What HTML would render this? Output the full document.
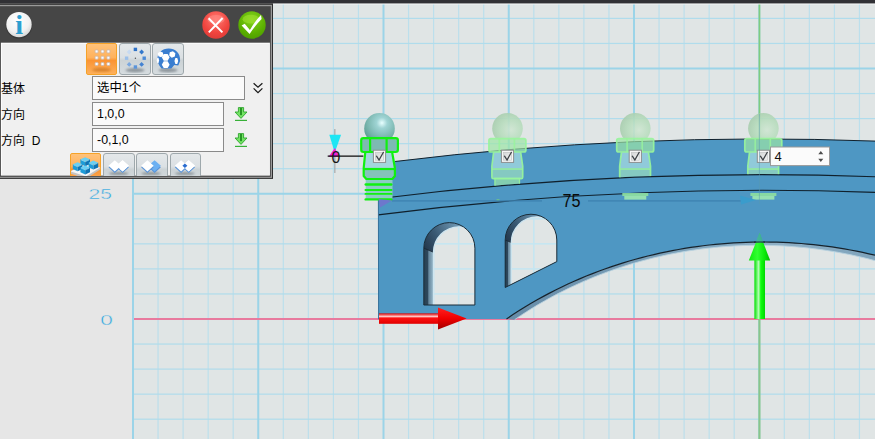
<!DOCTYPE html>
<html><head><meta charset="utf-8"><title>3D</title>
<style>
html,body{margin:0;padding:0;}
body{width:875px;height:439px;overflow:hidden;position:relative;background:#e6e6e6;font-family:"Liberation Sans","Noto Sans CJK SC",sans-serif;}
#cv{position:absolute;left:0;top:0;}
#dlg{position:absolute;left:0px;top:0px;width:270px;height:176px;overflow:hidden;}
.lbl{position:absolute;left:1px;font-size:12px;color:#000;white-space:nowrap;}
.inp{position:absolute;left:92px;height:22px;border:1px solid #8a8a8a;background:#fafafa;font-size:12.4px;line-height:22px;padding-left:4px;box-sizing:content-box;color:#000;}
.tb{position:absolute;border:1px solid #9ea8ac;border-radius:3px;background:linear-gradient(#e4e8ea 0%,#dbe0e3 45%,#ccd3d6 55%,#d6dcdf 100%);box-sizing:border-box;}
.tb.on{border-color:#f5a228;border-radius:2px;background:linear-gradient(#ffc27a 0%,#ffb25c 45%,#fa9434 55%,#fdb05c 100%);}
</style></head><body>

<svg id="cv" width="875" height="439" viewBox="0 0 875 439">
<defs>
<radialGradient id="sph1" cx="0.58" cy="0.32" r="0.7"><stop offset="0" stop-color="#e8ffff"/><stop offset="0.25" stop-color="#9fd4d4"/><stop offset="0.7" stop-color="#78b4ac"/><stop offset="1" stop-color="#5a9a90"/></radialGradient>
<radialGradient id="sph2" cx="0.62" cy="0.55" r="0.8"><stop offset="0" stop-color="#cfe6d2"/><stop offset="0.45" stop-color="#b6dcbc"/><stop offset="0.8" stop-color="#a6ccac"/><stop offset="1" stop-color="#9cc0a4"/></radialGradient>
<linearGradient id="redsh" x1="0" y1="0" x2="0" y2="1"><stop offset="0" stop-color="#e00000"/><stop offset="0.3" stop-color="#ffc4c4"/><stop offset="0.45" stop-color="#ff1010"/><stop offset="1" stop-color="#e00000"/></linearGradient>
<linearGradient id="redhd" x1="0" y1="0" x2="0" y2="1"><stop offset="0" stop-color="#ff2020"/><stop offset="0.5" stop-color="#f00000"/><stop offset="1" stop-color="#a00000"/></linearGradient>
<linearGradient id="grnsh" x1="0" y1="0" x2="1" y2="0"><stop offset="0" stop-color="#00e000"/><stop offset="0.4" stop-color="#b4ffb4"/><stop offset="0.6" stop-color="#10ff10"/><stop offset="1" stop-color="#00d800"/></linearGradient>
<linearGradient id="grnhd" x1="0" y1="0" x2="1" y2="0"><stop offset="0" stop-color="#10e810"/><stop offset="0.4" stop-color="#30ff30"/><stop offset="0.75" stop-color="#08e808"/><stop offset="1" stop-color="#00b800"/></linearGradient>
<linearGradient id="soff" gradientUnits="userSpaceOnUse" x1="506" y1="0" x2="875" y2="0"><stop offset="0" stop-color="#668ca8"/><stop offset="0.5" stop-color="#7fa4bc"/><stop offset="0.72" stop-color="#8eb0c6"/><stop offset="1" stop-color="#7fa4bc"/></linearGradient>
<linearGradient id="tun1" x1="0" y1="0" x2="1" y2="0"><stop offset="0" stop-color="#2c4a60"/><stop offset="1" stop-color="#7fa9c6"/></linearGradient>
<linearGradient id="cbg" x1="0" y1="0" x2="1" y2="1"><stop offset="0" stop-color="#d4d6d6"/><stop offset="1" stop-color="#f4f4f4"/></linearGradient>
</defs>
<rect x="133" y="4" width="742" height="435" fill="#e0e5e5"/>
<rect x="157.45" y="4" width="1.2" height="439" fill="#bcdfec"/>
<rect x="182.50" y="4" width="1.2" height="439" fill="#bcdfec"/>
<rect x="207.55" y="4" width="1.2" height="439" fill="#bcdfec"/>
<rect x="232.60" y="4" width="1.2" height="439" fill="#bcdfec"/>
<rect x="282.70" y="4" width="1.2" height="439" fill="#bcdfec"/>
<rect x="307.75" y="4" width="1.2" height="439" fill="#bcdfec"/>
<rect x="332.80" y="4" width="1.2" height="439" fill="#bcdfec"/>
<rect x="357.85" y="4" width="1.2" height="439" fill="#bcdfec"/>
<rect x="407.95" y="4" width="1.2" height="439" fill="#bcdfec"/>
<rect x="433.00" y="4" width="1.2" height="439" fill="#bcdfec"/>
<rect x="458.05" y="4" width="1.2" height="439" fill="#bcdfec"/>
<rect x="483.10" y="4" width="1.2" height="439" fill="#bcdfec"/>
<rect x="533.20" y="4" width="1.2" height="439" fill="#bcdfec"/>
<rect x="558.25" y="4" width="1.2" height="439" fill="#bcdfec"/>
<rect x="583.30" y="4" width="1.2" height="439" fill="#bcdfec"/>
<rect x="608.35" y="4" width="1.2" height="439" fill="#bcdfec"/>
<rect x="658.45" y="4" width="1.2" height="439" fill="#bcdfec"/>
<rect x="683.50" y="4" width="1.2" height="439" fill="#bcdfec"/>
<rect x="708.55" y="4" width="1.2" height="439" fill="#bcdfec"/>
<rect x="733.60" y="4" width="1.2" height="439" fill="#bcdfec"/>
<rect x="783.70" y="4" width="1.2" height="439" fill="#bcdfec"/>
<rect x="808.75" y="4" width="1.2" height="439" fill="#bcdfec"/>
<rect x="833.80" y="4" width="1.2" height="439" fill="#bcdfec"/>
<rect x="858.85" y="4" width="1.2" height="439" fill="#bcdfec"/>
<rect x="133" y="418.60" width="875" height="1.2" fill="#b0dcec"/>
<rect x="133" y="393.55" width="875" height="1.2" fill="#b0dcec"/>
<rect x="133" y="368.50" width="875" height="1.2" fill="#b0dcec"/>
<rect x="133" y="343.45" width="875" height="1.2" fill="#b0dcec"/>
<rect x="133" y="293.35" width="875" height="1.2" fill="#b0dcec"/>
<rect x="133" y="268.30" width="875" height="1.2" fill="#b0dcec"/>
<rect x="133" y="243.25" width="875" height="1.2" fill="#b0dcec"/>
<rect x="133" y="218.20" width="875" height="1.2" fill="#b0dcec"/>
<rect x="133" y="168.10" width="875" height="1.2" fill="#b0dcec"/>
<rect x="133" y="143.05" width="875" height="1.2" fill="#b0dcec"/>
<rect x="133" y="118.00" width="875" height="1.2" fill="#b0dcec"/>
<rect x="133" y="92.95" width="875" height="1.2" fill="#b0dcec"/>
<rect x="133" y="42.85" width="875" height="1.2" fill="#b0dcec"/>
<rect x="133" y="17.80" width="875" height="1.2" fill="#b0dcec"/>
<rect x="133" y="192.75" width="875" height="2" fill="#9bd4e8"/>
<rect x="133" y="67.50" width="875" height="2" fill="#9bd4e8"/>
<rect x="132.00" y="4" width="2" height="439" fill="#9bd4e8"/>
<rect x="257.25" y="4" width="2" height="439" fill="#9bd4e8"/>
<rect x="382.50" y="4" width="2" height="439" fill="#9bd4e8"/>
<rect x="507.75" y="4" width="2" height="439" fill="#9bd4e8"/>
<rect x="633.00" y="4" width="2" height="439" fill="#9bd4e8"/>
<rect x="758.25" y="4" width="2" height="439" fill="#9bd4e8"/>
<rect x="134" y="318" width="875" height="2" fill="#e87a9e"/>
<rect x="758.6" y="4" width="1.7" height="439" fill="#80cc7e"/>
<text x="88.6" y="199.3" font-family="Liberation Sans,sans-serif" font-size="15.4" fill="#2fa6e0" textLength="23.4" lengthAdjust="spacingAndGlyphs" stroke="#e6e6e6" stroke-width="0.4">25</text>
<text x="100.2" y="324.7" font-family="Liberation Sans,sans-serif" font-size="15.4" fill="#2fa6e0" textLength="12.6" lengthAdjust="spacingAndGlyphs" stroke="#e6e6e6" stroke-width="0.4">0</text>
<path d="M514.6,319.69 L520.6,315.63 L526.6,311.73 L532.6,307.98 L538.6,304.37 L544.6,300.90 L550.6,297.56 L556.6,294.35 L562.7,291.27 L568.7,288.31 L574.7,285.47 L580.7,282.74 L586.7,280.13 L592.7,277.62 L598.7,275.22 L604.7,272.93 L610.7,270.74 L616.7,268.65 L622.7,266.66 L628.7,264.76 L634.7,262.96 L640.7,261.26 L646.7,259.65 L652.8,258.12 L658.8,256.69 L664.8,255.35 L670.8,254.09 L676.8,252.92 L682.8,251.84 L688.8,250.84 L694.8,249.93 L700.8,249.10 L706.8,248.35 L712.8,247.69 L718.8,247.11 L724.8,246.60 L730.8,246.19 L736.8,245.85 L742.9,245.59 L748.9,245.41 L754.9,245.32 L760.9,245.30 L766.9,245.37 L772.9,245.52 L778.9,245.74 L784.9,246.05 L790.9,246.44 L796.9,246.91 L802.9,247.46 L808.9,248.09 L814.9,248.81 L820.9,249.61 L826.9,250.49 L833.0,251.45 L839.0,252.51 L845.0,253.64 L851.0,254.87 L857.0,256.18 L863.0,257.57 L869.0,259.06 L875.0,260.64 L875.0,255.24 L868.9,253.80 L862.7,252.45 L856.6,251.18 L850.4,250.00 L844.3,248.91 L838.1,247.89 L832.0,246.96 L825.9,246.11 L819.7,245.35 L813.6,244.66 L807.4,244.05 L801.3,243.52 L795.2,243.07 L789.0,242.70 L782.9,242.41 L776.7,242.20 L770.6,242.06 L764.5,242.00 L758.3,242.02 L752.2,242.12 L746.0,242.30 L739.9,242.55 L733.7,242.89 L727.6,243.30 L721.5,243.79 L715.3,244.36 L709.2,245.01 L703.0,245.74 L696.9,246.55 L690.8,247.44 L684.6,248.42 L678.5,249.48 L672.3,250.62 L666.2,251.84 L660.0,253.15 L653.9,254.55 L647.8,256.03 L641.6,257.61 L635.5,259.27 L629.3,261.03 L623.2,262.88 L617.0,264.82 L610.9,266.86 L604.8,269.00 L598.6,271.24 L592.5,273.58 L586.3,276.03 L580.2,278.59 L574.1,281.25 L567.9,284.03 L561.8,286.93 L555.6,289.95 L549.5,293.10 L543.4,296.37 L537.2,299.78 L531.1,303.32 L524.9,307.01 L518.8,310.85 L512.6,314.85 L506.5,319.01 Z" fill="url(#soff)"/>
<path d="M514.6,319.69 L520.6,315.63 L526.6,311.73 L532.6,307.98 L538.6,304.37 L544.6,300.90 L550.6,297.56 L556.6,294.35 L562.7,291.27 L568.7,288.31 L574.7,285.47 L580.7,282.74 L586.7,280.13 L592.7,277.62 L598.7,275.22 L604.7,272.93 L610.7,270.74 L616.7,268.65 L622.7,266.66 L628.7,264.76 L634.7,262.96 L640.7,261.26 L646.7,259.65 L652.8,258.12 L658.8,256.69 L664.8,255.35 L670.8,254.09 L676.8,252.92 L682.8,251.84 L688.8,250.84 L694.8,249.93 L700.8,249.10 L706.8,248.35 L712.8,247.69 L718.8,247.11 L724.8,246.60 L730.8,246.19 L736.8,245.85 L742.9,245.59 L748.9,245.41 L754.9,245.32 L760.9,245.30 L766.9,245.37 L772.9,245.52 L778.9,245.74 L784.9,246.05 L790.9,246.44 L796.9,246.91 L802.9,247.46 L808.9,248.09 L814.9,248.81 L820.9,249.61 L826.9,250.49 L833.0,251.45 L839.0,252.51 L845.0,253.64 L851.0,254.87 L857.0,256.18 L863.0,257.57 L869.0,259.06 L875.0,260.64" fill="none" stroke="#b9d2e0" stroke-width="0.9"/>
<path d="M378.5,319 L378.2,198.7 L395.0,161.5 A3000,3000 0 0 1 875,141.1 L875.0,255.24 L868.9,253.80 L862.7,252.45 L856.6,251.18 L850.4,250.00 L844.3,248.91 L838.1,247.89 L832.0,246.96 L825.9,246.11 L819.7,245.35 L813.6,244.66 L807.4,244.05 L801.3,243.52 L795.2,243.07 L789.0,242.70 L782.9,242.41 L776.7,242.20 L770.6,242.06 L764.5,242.00 L758.3,242.02 L752.2,242.12 L746.0,242.30 L739.9,242.55 L733.7,242.89 L727.6,243.30 L721.5,243.79 L715.3,244.36 L709.2,245.01 L703.0,245.74 L696.9,246.55 L690.8,247.44 L684.6,248.42 L678.5,249.48 L672.3,250.62 L666.2,251.84 L660.0,253.15 L653.9,254.55 L647.8,256.03 L641.6,257.61 L635.5,259.27 L629.3,261.03 L623.2,262.88 L617.0,264.82 L610.9,266.86 L604.8,269.00 L598.6,271.24 L592.5,273.58 L586.3,276.03 L580.2,278.59 L574.1,281.25 L567.9,284.03 L561.8,286.93 L555.6,289.95 L549.5,293.10 L543.4,296.37 L537.2,299.78 L531.1,303.32 L524.9,307.01 L518.8,310.85 L512.6,314.85 L506.5,319.01 Z" fill="#4e97c3"/>
<path d="M395.0,161.5 A3000,3000 0 0 1 875,141.1" fill="none" stroke="#10202c" stroke-width="1"/>
<path d="M377.6,198.7 A3075,3075 0 0 1 875,176.7" fill="none" stroke="#10202c" stroke-width="1.1"/>
<path d="M378.2,214.9 A3015,3015 0 0 1 875,192.4" fill="none" stroke="#10202c" stroke-width="1.1"/>
<path d="M506.5,319.01 L512.6,314.85 L518.8,310.85 L524.9,307.01 L531.1,303.32 L537.2,299.78 L543.4,296.37 L549.5,293.10 L555.6,289.95 L561.8,286.93 L567.9,284.03 L574.1,281.25 L580.2,278.59 L586.3,276.03 L592.5,273.58 L598.6,271.24 L604.8,269.00 L610.9,266.86 L617.0,264.82 L623.2,262.88 L629.3,261.03 L635.5,259.27 L641.6,257.61 L647.8,256.03 L653.9,254.55 L660.0,253.15 L666.2,251.84 L672.3,250.62 L678.5,249.48 L684.6,248.42 L690.8,247.44 L696.9,246.55 L703.0,245.74 L709.2,245.01 L715.3,244.36 L721.5,243.79 L727.6,243.30 L733.7,242.89 L739.9,242.55 L746.0,242.30 L752.2,242.12 L758.3,242.02 L764.5,242.00 L770.6,242.06 L776.7,242.20 L782.9,242.41 L789.0,242.70 L795.2,243.07 L801.3,243.52 L807.4,244.05 L813.6,244.66 L819.7,245.35 L825.9,246.11 L832.0,246.96 L838.1,247.89 L844.3,248.91 L850.4,250.00 L856.6,251.18 L862.7,252.45 L868.9,253.80 L875.0,255.24" fill="none" stroke="#15222c" stroke-width="1.2"/>
<path d="M378.4,198.7 L378.6,319.3" fill="none" stroke="#35709a" stroke-width="1"/>
<path d="M378,198.7 L395.0,161.5" fill="none" stroke="#3c7caa" stroke-width="0.8"/>
<clipPath id="w1"><path d="M423.8,305 L423.8,248.14999999999998 A25.55,25.55 0 0 1 474.9,248.14999999999998 L474.9,305 Z"/></clipPath>
<clipPath id="w1i"><path d="M433.5,329.2 L433.5,252.34999999999997 A25.55,25.55 0 0 1 484.59999999999997,252.34999999999997 L484.59999999999997,329.2 Z"/></clipPath>
<linearGradient id="w1a" gradientUnits="userSpaceOnUse" x1="423.8" y1="248.14999999999998" x2="467.2" y2="222.6"><stop offset="0" stop-color="#22364a"/><stop offset="0.35" stop-color="#3a5a74"/><stop offset="1" stop-color="#84b0cc"/></linearGradient>
<linearGradient id="w1w" gradientUnits="userSpaceOnUse" x1="423.8" y1="0" x2="433.5" y2="0"><stop offset="0" stop-color="#284052"/><stop offset="0.44" stop-color="#2e485c"/><stop offset="0.5" stop-color="#65869c"/><stop offset="1" stop-color="#9cbccd"/></linearGradient>
<g clip-path="url(#w1)">
<path d="M423.8,305 L423.8,248.14999999999998 A25.55,25.55 0 0 1 474.9,248.14999999999998 L474.9,305 Z" fill="url(#w1a)"/>
<path d="M423.8,248.14999999999998 L433.5,252.34999999999997 L433.5,335 L423.8,335 Z" fill="url(#w1w)"/>
<path d="M423.8,248.14999999999998 L433.5,252.34999999999997" stroke="#16242e" stroke-width="0.9" opacity="0.8"/>
<path d="M433.5,329.2 L433.5,252.34999999999997 A25.55,25.55 0 0 1 484.59999999999997,252.34999999999997 L484.59999999999997,329.2 Z" fill="#e0e5e5"/>
<g clip-path="url(#w1i)">
<rect x="432.85" y="222.6" width="1.5" height="120" fill="#c4e6f2"/>
<rect x="457.90" y="222.6" width="1.5" height="120" fill="#c4e6f2"/>
<rect x="423.8" y="293.20" width="51.099999999999966" height="1.5" fill="#c4e6f2"/>
<rect x="423.8" y="268.15" width="51.099999999999966" height="1.5" fill="#c4e6f2"/>
<rect x="423.8" y="243.10" width="51.099999999999966" height="1.5" fill="#c4e6f2"/>
</g>
<path d="M433.5,329.2 L433.5,252.34999999999997 A25.55,25.55 0 0 1 484.59999999999997,252.34999999999997 L484.59999999999997,329.2 Z" fill="none" stroke="#cfe6f0" stroke-width="1.3"/>
</g>
<path d="M423.8,305 L423.8,248.14999999999998 A25.55,25.55 0 0 1 474.9,248.14999999999998 L474.9,305 Z" fill="none" stroke="#1a2c38" stroke-width="1"/>
<clipPath id="w2"><path d="M505.2,287.5 L505.2,239.99999999999997 A25.80,25.80 0 0 1 556.8,239.99999999999997 L556.8,261.6 Z"/></clipPath>
<clipPath id="w2i"><path d="M511.3,310.1 L511.3,242.59999999999997 A25.80,25.80 0 0 1 562.9,242.59999999999997 L562.9,284.20000000000005 Z"/></clipPath>
<linearGradient id="w2a" gradientUnits="userSpaceOnUse" x1="505.2" y1="239.99999999999997" x2="549.1" y2="214.2"><stop offset="0" stop-color="#22364a"/><stop offset="0.35" stop-color="#3a5a74"/><stop offset="1" stop-color="#84b0cc"/></linearGradient>
<linearGradient id="w2w" gradientUnits="userSpaceOnUse" x1="505.2" y1="0" x2="511.3" y2="0"><stop offset="0" stop-color="#284052"/><stop offset="0.44" stop-color="#2e485c"/><stop offset="0.5" stop-color="#65869c"/><stop offset="1" stop-color="#9cbccd"/></linearGradient>
<g clip-path="url(#w2)">
<path d="M505.2,287.5 L505.2,239.99999999999997 A25.80,25.80 0 0 1 556.8,239.99999999999997 L556.8,261.6 Z" fill="url(#w2a)"/>
<path d="M505.2,239.99999999999997 L511.3,242.59999999999997 L511.3,317.5 L505.2,317.5 Z" fill="url(#w2w)"/>
<path d="M505.2,239.99999999999997 L511.3,242.59999999999997" stroke="#16242e" stroke-width="0.9" opacity="0.8"/>
<path d="M511.3,310.1 L511.3,242.59999999999997 A25.80,25.80 0 0 1 562.9,242.59999999999997 L562.9,284.20000000000005 Z" fill="#e0e5e5"/>
<g clip-path="url(#w2i)">
<rect x="533.05" y="214.2" width="1.5" height="120" fill="#c4e6f2"/>
<rect x="505.2" y="268.15" width="51.599999999999966" height="1.5" fill="#c4e6f2"/>
<rect x="505.2" y="243.10" width="51.599999999999966" height="1.5" fill="#c4e6f2"/>
<rect x="505.2" y="218.05" width="51.599999999999966" height="1.5" fill="#c4e6f2"/>
</g>
<path d="M511.3,310.1 L511.3,242.59999999999997 A25.80,25.80 0 0 1 562.9,242.59999999999997 L562.9,284.20000000000005 Z" fill="none" stroke="#cfe6f0" stroke-width="1.3"/>
</g>
<path d="M505.2,287.5 L505.2,239.99999999999997 A25.80,25.80 0 0 1 556.8,239.99999999999997 L556.8,261.6 Z" fill="none" stroke="#1a2c38" stroke-width="1"/>
<clipPath id="sphc"><rect x="0" y="0" width="875" height="138.4"/></clipPath>
<clipPath id="abv1"><path d="M377,198.2 A3075,3075 0 0 1 875,176.1 L875,0 L377,0 Z"/></clipPath>
<g>
<circle cx="379.5" cy="128.4" r="15.3" fill="url(#sph1)"/>
<rect x="365.7" y="178" width="26.8" height="21.6" rx="2" fill="#8cccc4"/>
<rect x="364.5" y="183.2" width="28" height="2.6" rx="1.3" fill="#10f010"/>
<rect x="364.5" y="189.1" width="28" height="1.8" rx="0.9" fill="#10f010"/>
<rect x="364.5" y="193.0" width="28" height="1.8" rx="0.9" fill="#10f010"/>
<rect x="364.5" y="198.20000000000002" width="28" height="2.4" rx="1.2" fill="#10f010"/>
<path d="M365.3,152 L392.1,152 L394.9,169 L363.7,169 Z" fill="#a3d6de"/>
<path d="M363.7,169 L394.9,169 L394.9,176 L392.3,179 L366.3,179 L363.7,176 Z" fill="#86c2bc"/>
<path d="M365.3,152 L363.7,168 L363.7,176 L366.3,179 L392.3,179 L394.9,176 L394.9,168 L392.1,152" fill="none" stroke="#10f010" stroke-width="2.2" stroke-linejoin="round"/>
<path d="M363.7,169 L394.9,169" stroke="#10f010" stroke-width="2.2"/>
<rect x="361.2" y="138.1" width="36.7" height="13.9" rx="2.2" fill="#7dbab2" stroke="#10f010" stroke-width="2.2"/>
<path d="M370.1,138 V152 M386.6,138 V152" stroke="#10f010" stroke-width="2.2"/>
</g>
<rect x="373.4" y="150.2" width="12.2" height="12.2" fill="#f6f6f6" stroke="#8c8e8e" stroke-width="1"/>
<rect x="375.59999999999997" y="152.39999999999998" width="7.8" height="7.8" fill="url(#cbg)" stroke="#c4c6c6" stroke-width="0.7"/>
<path d="M375.7,156.0 L376.9,155.6 L379.0,158.79999999999998 L383.0,151.7 L384.2,152.1 L379.09999999999997,161.2 Z" fill="#3e4246"/>
<g clip-path="url(#abv1)">
<circle cx="507.5" cy="128.4" r="15.3" fill="url(#sph2)" opacity="0.88" clip-path="url(#sphc)"/>
<rect x="494.9" y="178.4" width="24.6" height="8" fill="#98e4a8" fill-opacity="0.7" stroke="#98f49c" stroke-width="1.3" stroke-opacity="0.92"/>
<path d="M493.6,152 L520.7,152 L522.7,168.6 L491.9,168.6 Z" fill="#bcecea" fill-opacity="0.6"/>
<rect x="491.9" y="168.6" width="30.8" height="10" rx="1.5" fill="#a8e8c0" fill-opacity="0.62"/>
<path d="M493.6,152.4 L491.9,166 L491.9,177.2 Q491.9,178.6 493.3,178.6 L521.3,178.6 Q522.7,178.6 522.7,177.2 L522.7,166 L520.7,152.4" fill="none" stroke="#98f49c" stroke-width="1.7" stroke-opacity="0.92" stroke-linejoin="round"/>
<path d="M491.9,169 L522.7,169" stroke="#98f49c" stroke-width="1.7" stroke-opacity="0.92"/>
<rect x="488.9" y="138.7" width="37" height="13.3" rx="2" fill="#9ce6a6" fill-opacity="0.7" stroke="#98f49c" stroke-width="1.7" stroke-opacity="0.92"/>
<path d="M499.3,138.7 V152 M514.4,138.7 V152" stroke="#98f49c" stroke-width="1.7" stroke-opacity="0.8"/>
</g>
<rect x="496.5" y="199.4" width="3" height="1.6" fill="#7fdc6a" opacity="0.9"/>
<rect x="501.4" y="150.2" width="12.2" height="12.2" fill="#f6f6f6" stroke="#8c8e8e" stroke-width="1"/>
<rect x="503.59999999999997" y="152.39999999999998" width="7.8" height="7.8" fill="url(#cbg)" stroke="#c4c6c6" stroke-width="0.7"/>
<path d="M503.7,156.0 L504.9,155.6 L507.0,158.79999999999998 L511.0,151.7 L512.1999999999999,152.1 L507.09999999999997,161.2 Z" fill="#3e4246"/>
<g clip-path="url(#abv1)">
<circle cx="635.3" cy="128.4" r="15.3" fill="url(#sph2)" opacity="0.88" clip-path="url(#sphc)"/>
<rect x="622.6999999999999" y="178.4" width="24.6" height="8" fill="#98e4a8" fill-opacity="0.7" stroke="#98f49c" stroke-width="1.3" stroke-opacity="0.92"/>
<path d="M621.4,152 L648.5,152 L650.5,168.6 L619.6999999999999,168.6 Z" fill="#bcecea" fill-opacity="0.6"/>
<rect x="619.6999999999999" y="168.6" width="30.8" height="10" rx="1.5" fill="#a8e8c0" fill-opacity="0.62"/>
<path d="M621.4,152.4 L619.6999999999999,166 L619.6999999999999,177.2 Q619.6999999999999,178.6 621.0999999999999,178.6 L649.0999999999999,178.6 Q650.5,178.6 650.5,177.2 L650.5,166 L648.5,152.4" fill="none" stroke="#98f49c" stroke-width="1.7" stroke-opacity="0.92" stroke-linejoin="round"/>
<path d="M619.6999999999999,169 L650.5,169" stroke="#98f49c" stroke-width="1.7" stroke-opacity="0.92"/>
<rect x="616.6999999999999" y="138.7" width="37" height="13.3" rx="2" fill="#9ce6a6" fill-opacity="0.7" stroke="#98f49c" stroke-width="1.7" stroke-opacity="0.92"/>
<path d="M627.0999999999999,138.7 V152 M642.1999999999999,138.7 V152" stroke="#98f49c" stroke-width="1.7" stroke-opacity="0.8"/>
</g>
<rect x="622.3" y="193" width="26" height="3" fill="#8fe0a0" opacity="0.9"/><rect x="624.3" y="196" width="22" height="3.6" fill="#a0e8b0" opacity="0.9"/>
<rect x="629.1999999999999" y="150.2" width="12.2" height="12.2" fill="#f6f6f6" stroke="#8c8e8e" stroke-width="1"/>
<rect x="631.4" y="152.39999999999998" width="7.8" height="7.8" fill="url(#cbg)" stroke="#c4c6c6" stroke-width="0.7"/>
<path d="M631.4999999999999,156.0 L632.6999999999999,155.6 L634.8,158.79999999999998 L638.8,151.7 L639.9999999999999,152.1 L634.9,161.2 Z" fill="#3e4246"/>
<g clip-path="url(#abv1)">
<circle cx="763.4" cy="128.4" r="15.3" fill="url(#sph2)" opacity="0.88" clip-path="url(#sphc)"/>
<rect x="750.8" y="178.4" width="24.6" height="8" fill="#98e4a8" fill-opacity="0.7" stroke="#98f49c" stroke-width="1.3" stroke-opacity="0.92"/>
<path d="M749.5,152 L776.6,152 L778.6,168.6 L747.8,168.6 Z" fill="#bcecea" fill-opacity="0.6"/>
<rect x="747.8" y="168.6" width="30.8" height="10" rx="1.5" fill="#a8e8c0" fill-opacity="0.62"/>
<path d="M749.5,152.4 L747.8,166 L747.8,177.2 Q747.8,178.6 749.1999999999999,178.6 L777.1999999999999,178.6 Q778.6,178.6 778.6,177.2 L778.6,166 L776.6,152.4" fill="none" stroke="#98f49c" stroke-width="1.7" stroke-opacity="0.92" stroke-linejoin="round"/>
<path d="M747.8,169 L778.6,169" stroke="#98f49c" stroke-width="1.7" stroke-opacity="0.92"/>
<rect x="744.8" y="138.7" width="37" height="13.3" rx="2" fill="#9ce6a6" fill-opacity="0.7" stroke="#98f49c" stroke-width="1.7" stroke-opacity="0.92"/>
<path d="M755.1999999999999,138.7 V152 M770.3,138.7 V152" stroke="#98f49c" stroke-width="1.7" stroke-opacity="0.8"/>
</g>
<rect x="750.4" y="193" width="26" height="3" fill="#8fe0a0" opacity="0.9"/><rect x="752.4" y="196" width="22" height="3.6" fill="#a0e8b0" opacity="0.9"/>
<rect x="757.3" y="150.2" width="12.2" height="12.2" fill="#f6f6f6" stroke="#8c8e8e" stroke-width="1"/>
<rect x="759.5" y="152.39999999999998" width="7.8" height="7.8" fill="url(#cbg)" stroke="#c4c6c6" stroke-width="0.7"/>
<path d="M759.5999999999999,156.0 L760.8,155.6 L762.9,158.79999999999998 L766.9,151.7 L768.0999999999999,152.1 L763.0,161.2 Z" fill="#3e4246"/>
<rect x="758.9" y="114" width="1" height="90" fill="#5a9ab0" opacity="0.5"/>
<path d="M392,200.8 L542,200.8 M588,200.8 L742,200.8" stroke="#3f84b2" stroke-width="1.8" opacity="0.8"/>
<path d="M378.6,199 L392,200.4 L380,207.4 Z" fill="#6d78cc"/>
<path d="M756,200 L740,195.6 L741,204.4 Z" fill="#3a9ccc"/>
<text x="562.6" y="207.4" font-family="Liberation Sans,sans-serif" font-size="18.4" fill="#0a0a0a" textLength="18" lengthAdjust="spacingAndGlyphs">75</text>
<rect x="334.3" y="129" width="1.1" height="44" fill="#a2a4a6"/>
<path d="M329.3,134.7 L341.1,134.7 L335.5,150.4 L334.1,150.4 Z" fill="#1ee6f4"/>
<path d="M328.6,156.8 L339.4,156.8 L334.8,148 Z" fill="#f020dc"/>
<path d="M327.7,156.2 H363.3" stroke="#0c0c0c" stroke-width="1.3"/>
<text x="331.5" y="162.8" font-family="Liberation Sans,sans-serif" font-size="17.4" fill="#161616" textLength="8.8" lengthAdjust="spacingAndGlyphs">0</text>
<rect x="379" y="313.4" width="60" height="10.4" fill="url(#redsh)"/>
<path d="M438,307.6 L466.6,318.4 L438,329.4 Z" fill="url(#redhd)"/>
<rect x="758.7" y="318" width="1.5" height="121" fill="#8cc48a"/>
<rect x="754.4" y="259" width="10.6" height="60" fill="url(#grnsh)"/>
<path d="M748.8,260.6 L770.2,260.6 L759.6,233 Z" fill="url(#grnhd)"/>
<path d="M759.6,233 L755.6,242.6 L763.6,242.6 Z" fill="#4e97c3" opacity="0.72"/>
<path d="M754,242.1 Q759.5,241.9 765,242.05" stroke="#15222c" stroke-width="1.2" fill="none" opacity="0.85"/>
<rect x="770.5" y="147" width="59" height="18.6" fill="#fbfbfb" stroke="#9a9a9a" stroke-width="1"/>
<text x="774.6" y="161.4" font-family="Liberation Sans,sans-serif" font-size="13" fill="#101010">4</text>
<path d="M818.3,154.3 L820.8,151 L823.3,154.3 Z M818.3,158.8 L820.8,162.1 L823.3,158.8 Z" fill="#4c4c4c"/>
<rect x="0" y="0" width="875" height="3.6" fill="#313135"/>
<rect x="273" y="3.6" width="602" height="1" fill="#f2f6f6" opacity="0.8"/>
<rect x="-2" y="3.5" width="275" height="175.4" fill="#2d2d2d"/>
<rect x="-2" y="4.8" width="274" height="173.1" fill="#9a9a9a"/>
<rect x="-2" y="6.2" width="272.8" height="170.6" fill="#464646"/>
<rect x="0.9" y="42.7" width="269" height="132.9" fill="#fdfdfd"/>
<rect x="1.9" y="43.8" width="267.2" height="131.2" fill="#f0f0f0"/>
</svg>
<div id="dlg">
<svg style="position:absolute;left:4px;top:10px" width="30" height="30" viewBox="0 0 30 30"><defs><radialGradient id="ig" cx="0.45" cy="0.35" r="0.75"><stop offset="0" stop-color="#ffffff"/><stop offset="0.6" stop-color="#f2f2f2"/><stop offset="1" stop-color="#c9c9c9"/></radialGradient></defs><circle cx="15" cy="15.4" r="13.2" fill="#2c2c2c" opacity="0.5"/><circle cx="15" cy="14.6" r="12.7" fill="url(#ig)"/><text x="15.2" y="23.8" text-anchor="middle" font-family="Liberation Serif,serif" font-weight="bold" font-size="28" fill="#2d9fd0">i</text></svg>
<svg style="position:absolute;left:200px;top:9px" width="32" height="32" viewBox="0 0 32 32"><defs><radialGradient id="rg" cx="0.5" cy="0.3" r="0.8"><stop offset="0" stop-color="#ff7a72"/><stop offset="0.6" stop-color="#f0443e"/><stop offset="1" stop-color="#d83a36"/></radialGradient></defs><circle cx="16" cy="16" r="13.7" fill="url(#rg)"/><ellipse cx="16" cy="10.4" rx="8.6" ry="4.4" fill="#ff8a84" opacity="0.6"/><path d="M8.6,9.2 L22.4,23.4 M22.6,9 L8.8,23.4" stroke="#ffffff" stroke-width="2" stroke-linecap="butt"/></svg>
<svg style="position:absolute;left:236px;top:9px" width="34" height="32" viewBox="0 0 34 32"><defs><radialGradient id="gg" cx="0.5" cy="0.3" r="0.8"><stop offset="0" stop-color="#86d420"/><stop offset="0.6" stop-color="#5cb000"/><stop offset="1" stop-color="#4a9800"/></radialGradient></defs><circle cx="16" cy="16" r="13.7" fill="url(#gg)"/><ellipse cx="15" cy="10.2" rx="8.4" ry="4.4" fill="#a4e432" opacity="0.55"/><path d="M5.6,16.6 L8.7,14.8 L13.9,20.9 Q19,12 25,6 L25.6,10 Q19,16.6 13.6,25 Z" fill="#ffffff"/></svg>
<div class="tb on" style="left:86px;top:43px;width:31px;height:32px"><svg width="30" height="31" viewBox="0 0 30 31" style="position:absolute;left:0;top:0"><ellipse cx="14.6" cy="25.8" rx="9.6" ry="2" fill="#b86410" opacity="0.5" filter="url(#bl3)"/><rect x="8.1" y="5.9" width="3" height="3" rx="0.8" fill="#fdfdfd" stroke="#c8b8b0" stroke-width="0.8"/><rect x="8.1" y="12.2" width="3" height="3" rx="0.8" fill="#fdfdfd" stroke="#c8b8b0" stroke-width="0.8"/><rect x="8.1" y="18.5" width="3" height="3" rx="0.8" fill="#fdfdfd" stroke="#c8b8b0" stroke-width="0.8"/><rect x="14.0" y="5.9" width="3" height="3" rx="0.8" fill="#fdfdfd" stroke="#c8b8b0" stroke-width="0.8"/><rect x="14.0" y="12.2" width="3" height="3" rx="0.8" fill="#fdfdfd" stroke="#c8b8b0" stroke-width="0.8"/><rect x="14.0" y="18.5" width="3" height="3" rx="0.8" fill="#fdfdfd" stroke="#c8b8b0" stroke-width="0.8"/><rect x="19.9" y="5.9" width="3" height="3" rx="0.8" fill="#fdfdfd" stroke="#c8b8b0" stroke-width="0.8"/><rect x="19.9" y="12.2" width="3" height="3" rx="0.8" fill="#fdfdfd" stroke="#c8b8b0" stroke-width="0.8"/><rect x="19.9" y="18.5" width="3" height="3" rx="0.8" fill="#fdfdfd" stroke="#c8b8b0" stroke-width="0.8"/></svg></div>
<div class="tb" style="left:119px;top:43px;width:31.5px;height:32px"><svg width="30" height="31" viewBox="0 0 30 31" style="position:absolute;left:0;top:0"><ellipse cx="15" cy="26.2" rx="9.6" ry="2.2" fill="#5a646c" opacity="0.55" filter="url(#bl3)"/><rect x="13.70" y="3.70" width="3.4" height="3.4" fill="#2f72c8" transform="rotate(0 15.40 5.40)"/><rect x="19.92" y="6.28" width="3.4" height="3.4" fill="#3478cc" transform="rotate(45 21.62 7.98)"/><rect x="22.50" y="12.50" width="3.4" height="3.4" fill="#4c8ad6" transform="rotate(90 24.20 14.20)"/><rect x="19.92" y="18.72" width="3.4" height="3.4" fill="#4382d2" transform="rotate(135 21.62 20.42)"/><rect x="13.70" y="21.30" width="3.4" height="3.4" fill="#5a94da" transform="rotate(180 15.40 23.00)"/><rect x="7.48" y="18.72" width="3.4" height="3.4" fill="#7aa8e0" transform="rotate(225 9.18 20.42)"/><rect x="4.90" y="12.50" width="3.4" height="3.4" fill="#9cc0ea" transform="rotate(270 6.60 14.20)"/><rect x="7.48" y="6.28" width="3.4" height="3.4" fill="#c6daf2" transform="rotate(315 9.18 7.98)"/><circle cx="15.4" cy="14.2" r="0.7" fill="#555"/></svg></div>
<div class="tb" style="left:152px;top:43px;width:32px;height:32px"><svg width="30" height="31" viewBox="0 0 30 31" style="position:absolute;left:0;top:0"><defs><filter id="bl3"><feGaussianBlur stdDeviation="1.1"/></filter></defs><ellipse cx="15" cy="26.2" rx="9.6" ry="2.2" fill="#5a646c" opacity="0.55" filter="url(#bl3)"/><path d="M4.3,17 C3.7,9 9.3,4.6 15.7,4.6 C22.1,4.6 27.7,9 27.1,17 L25.3,21.6 L21.3,21 L18.3,24.4 L8.5,24.4 L6.3,21.6 Z" fill="#3a7ed0"/><polygon points="16.60,13.30 14.65,16.68 10.75,16.68 8.80,13.30 10.75,9.92 14.65,9.92" fill="#fff"/><polygon points="10.42,11.43 8.12,13.35 5.30,12.33 4.78,9.37 7.08,7.45 9.90,8.47" fill="#fff"/><polygon points="22.40,9.27 21.83,12.52 18.73,13.65 16.20,11.53 16.77,8.28 19.87,7.15" fill="#fff"/><polygon points="25.17,17.00 24.23,19.94 22.37,19.94 21.43,17.00 22.36,14.06 24.23,14.06" fill="#fff"/><polygon points="16.60,20.70 14.65,24.08 10.75,24.08 8.80,20.70 10.75,17.32 14.65,17.32" fill="#fff"/><polygon points="6.10,16.40 5.50,19.00 4.30,19.00 3.70,16.40 4.30,13.80 5.50,13.80" fill="#fff"/></svg></div>
<div class="lbl" style="top:79px">基体</div>
<div class="lbl" style="top:105px">方向</div>
<div class="lbl" style="top:131px">方向&nbsp;&nbsp;D</div>
<div class="inp" style="top:76px;width:147px">选中1个</div>
<div class="inp" style="top:102px;width:126px">1,0,0</div>
<div class="inp" style="top:128px;width:126px">-0,1,0</div>
<svg style="position:absolute;left:251px;top:81px" width="14" height="14" viewBox="0 0 14 14"><path d="M2.6,2.2 L7,6.2 L11.4,2.2 M2.6,7.4 L7,11.6 L11.4,7.4" fill="none" stroke="#1a1a1a" stroke-width="1.25"/></svg>
<svg style="position:absolute;left:233px;top:105.6px" width="16" height="16" viewBox="0 0 16 16"><path d="M5.4,1.6 H10.6 V6 H14 L8,12.4 L2,6 H5.4 Z" fill="#74e464" stroke="#2fa42f" stroke-width="0.9"/><path d="M7,2 H9 V8.4 L8,9.6 L7,8.4 Z" fill="#1a8a1a" opacity="0.85"/><path d="M2,14.4 H14" stroke="#38b038" stroke-width="1.2"/></svg>
<svg style="position:absolute;left:233px;top:131.8px" width="16" height="16" viewBox="0 0 16 16"><path d="M5.4,1.6 H10.6 V6 H14 L8,12.4 L2,6 H5.4 Z" fill="#74e464" stroke="#2fa42f" stroke-width="0.9"/><path d="M7,2 H9 V8.4 L8,9.6 L7,8.4 Z" fill="#1a8a1a" opacity="0.85"/><path d="M2,14.4 H14" stroke="#38b038" stroke-width="1.2"/></svg>
<div class="tb on" style="left:70px;top:153px;width:31px;height:30px"><svg width="30" height="24" viewBox="0 0 30 24" style="position:absolute;left:0;top:0"><path d="M-0.6,17.4 L14,10.6 L29.2,13.4 L29.2,15.6 L15,24.6 L-0.6,19.6 Z" fill="#c4c4c4"/><path d="M-0.6,17.4 L14,10.6 L29.2,13.4 L15,22.4 Z" fill="#f6f6f6"/><path d="M9.4,5.300000000000001 L14.2,3.2 L19.0,5.300000000000001 L14.2,7.4 Z" fill="#6ad0f4"/><path d="M9.4,5.300000000000001 L14.2,7.4 L14.2,12.2 L9.4,10.100000000000001 Z" fill="#1e9cd8"/><path d="M19.0,5.300000000000001 L14.2,7.4 L14.2,12.2 L19.0,10.100000000000001 Z" fill="#0f74b4"/><path d="M10.0,5.800000000000001 L14.2,7.7 L18.4,5.800000000000001" fill="none" stroke="#9ae4fc" stroke-width="0.7"/><path d="M17.6,8.7 L22.400000000000002,6.6 L27.200000000000003,8.7 L22.400000000000002,10.8 Z" fill="#6ad0f4"/><path d="M17.6,8.7 L22.400000000000002,10.8 L22.400000000000002,15.600000000000001 L17.6,13.5 Z" fill="#1e9cd8"/><path d="M27.200000000000003,8.7 L22.400000000000002,10.8 L22.400000000000002,15.600000000000001 L27.200000000000003,13.5 Z" fill="#0f74b4"/><path d="M18.200000000000003,9.2 L22.400000000000002,11.100000000000001 L26.6,9.2" fill="none" stroke="#9ae4fc" stroke-width="0.7"/><path d="M1.8,10.299999999999999 L6.6,8.2 L11.4,10.299999999999999 L6.6,12.399999999999999 Z" fill="#6ad0f4"/><path d="M1.8,10.299999999999999 L6.6,12.399999999999999 L6.6,17.2 L1.8,15.099999999999998 Z" fill="#1e9cd8"/><path d="M11.4,10.299999999999999 L6.6,12.399999999999999 L6.6,17.2 L11.4,15.099999999999998 Z" fill="#0f74b4"/><path d="M2.4,10.799999999999999 L6.6,12.7 L10.8,10.799999999999999" fill="none" stroke="#9ae4fc" stroke-width="0.7"/><path d="M9.4,13.5 L14.2,11.4 L19.0,13.5 L14.2,15.600000000000001 Z" fill="#6ad0f4"/><path d="M9.4,13.5 L14.2,15.600000000000001 L14.2,20.400000000000002 L9.4,18.3 Z" fill="#1e9cd8"/><path d="M19.0,13.5 L14.2,15.600000000000001 L14.2,20.400000000000002 L19.0,18.3 Z" fill="#0f74b4"/><path d="M10.0,14.0 L14.2,15.900000000000002 L18.4,14.0" fill="none" stroke="#9ae4fc" stroke-width="0.7"/></svg></div>
<div class="tb" style="left:103.4px;top:153px;width:31.2px;height:30px"><svg width="30" height="24" viewBox="0 0 30 24" style="position:absolute;left:0;top:0"><defs><filter id="bl4"><feGaussianBlur stdDeviation="0.9"/></filter></defs><ellipse cx="14.700000000000001" cy="19.6" rx="10" ry="1.5" fill="#4a545c" opacity="0.5" filter="url(#bl4)"/><path d="M12.3,13.3 L18.6,7.700000000000001 L24.900000000000002,13.3 L18.6,18.9 Z" fill="#5a94d8"/><path d="M12.3,11.8 L18.6,6.200000000000001 L24.900000000000002,11.8 L18.6,17.4 Z" fill="#ffffff"/><path d="M4.500000000000001,13.3 L10.8,7.700000000000001 L17.1,13.3 L10.8,18.9 Z" fill="#5a94d8"/><path d="M4.500000000000001,11.8 L10.8,6.200000000000001 L17.1,11.8 L10.8,17.4 Z" fill="#ffffff"/><path d="M12.3,11.8 L18.6,6.200000000000001 L24.900000000000002,11.8 L18.6,17.4 Z" fill="#ffffff"/></svg></div>
<div class="tb" style="left:136px;top:153px;width:32px;height:30px"><svg width="30" height="24" viewBox="0 0 30 24" style="position:absolute;left:0;top:0"><defs><filter id="bl4"><feGaussianBlur stdDeviation="0.9"/></filter></defs><ellipse cx="14.0" cy="19.6" rx="10" ry="1.5" fill="#4a545c" opacity="0.5" filter="url(#bl4)"/><path d="M11.3,13.3 L17.6,7.700000000000001 L23.900000000000002,13.3 L17.6,18.9 Z" fill="#5a94d8"/><path d="M11.3,11.8 L17.6,6.200000000000001 L23.900000000000002,11.8 L17.6,17.4 Z" fill="#6cb0f2"/><path d="M4.1000000000000005,13.3 L10.4,7.700000000000001 L16.7,13.3 L10.4,18.9 Z" fill="#5a94d8"/><path d="M4.1000000000000005,11.8 L10.4,6.200000000000001 L16.7,11.8 L10.4,17.4 Z" fill="#ffffff"/></svg></div>
<div class="tb" style="left:170px;top:153px;width:31px;height:30px"><svg width="30" height="24" viewBox="0 0 30 24" style="position:absolute;left:0;top:0"><defs><filter id="bl4"><feGaussianBlur stdDeviation="0.9"/></filter></defs><ellipse cx="13.899999999999999" cy="19.6" rx="10" ry="1.5" fill="#4a545c" opacity="0.5" filter="url(#bl4)"/><path d="M11.399999999999999,13.3 L17.7,7.700000000000001 L24.0,13.3 L17.7,18.9 Z" fill="#5a94d8"/><path d="M11.399999999999999,11.8 L17.7,6.200000000000001 L24.0,11.8 L17.7,17.4 Z" fill="#ffffff"/><path d="M3.8,13.3 L10.1,7.700000000000001 L16.4,13.3 L10.1,18.9 Z" fill="#5a94d8"/><path d="M3.8,11.8 L10.1,6.200000000000001 L16.4,11.8 L10.1,17.4 Z" fill="#ffffff"/><path d="M11.399999999999999,11.8 L17.7,6.200000000000001 L24.0,11.8 L17.7,17.4 Z" fill="#ffffff"/><path d="M11.399999999999999,11.8 L13.899999999999999,9.57777777777778 L16.4,11.8 L13.899999999999999,14.022222222222222 Z" fill="#2a6cd0"/></svg></div>
</div>
</body></html>
